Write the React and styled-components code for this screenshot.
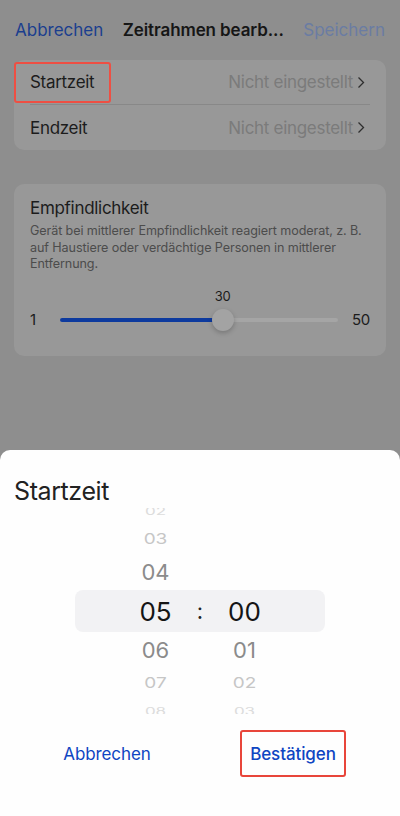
import styled, { createGlobalStyle } from 'styled-components'

const GlobalStyle = createGlobalStyle`
	* { box-sizing: border-box; }
	body {
		margin: 0;
		font-family: Inter, "Noto Sans", sans-serif;
		background: #8e8e8e;
		-webkit-font-smoothing: antialiased;
	}
`

const HOURS = [
	{ v: '02', d: -3 },
	{ v: '03', d: -2 },
	{ v: '04', d: -1 },
	{ v: '05', d: 0 },
	{ v: '06', d: 1 },
	{ v: '07', d: 2 },
	{ v: '08', d: 3 },
]

const MINUTES = [
	{ v: '', d: -3 },
	{ v: '', d: -2 },
	{ v: '', d: -1 },
	{ v: '00', d: 0 },
	{ v: '01', d: 1 },
	{ v: '02', d: 2 },
	{ v: '03', d: 3 },
]

const MIN = 1
const MAX = 50
const VALUE = 30

const App = () => {
	const pct = (VALUE - MIN) / (MAX - MIN)
	const thumbPos = `calc(11px + ${pct} * (100% - 22px))`
	return (
		<>
			<GlobalStyle />
			<Page>
				<NavBar>
					<NavButton>Abbrechen</NavButton>
					<NavTitle>Zeitrahmen bearb...</NavTitle>
					<NavButton $muted>Speichern</NavButton>
				</NavBar>

				<Card>
					<Row>
						<RowLabel $marked>Startzeit</RowLabel>
						<RowValue>Nicht eingestellt<Chevron /></RowValue>
					</Row>
					<Divider />
					<Row>
						<RowLabel>Endzeit</RowLabel>
						<RowValue>Nicht eingestellt<Chevron /></RowValue>
					</Row>
				</Card>

				<SensCard>
					<SensTitle>Empfindlichkeit</SensTitle>
					<SensText>
						Gerät bei mittlerer Empfindlichkeit reagiert moderat, z. B.<br />
						auf Haustiere oder verdächtige Personen in mittlerer<br />
						Entfernung.
					</SensText>
					<SliderRow>
						<SliderEnd>1</SliderEnd>
						<Track>
							<Fill style={{ width: thumbPos }} />
							<ValueTag style={{ left: thumbPos }}>{VALUE}</ValueTag>
							<Thumb style={{ left: thumbPos }} />
						</Track>
						<SliderEnd $right>50</SliderEnd>
					</SliderRow>
				</SensCard>
			</Page>

			<Sheet>
				<SheetTitle>Startzeit</SheetTitle>
				<Picker>
					<Band />
					<Wheel>
						{HOURS.map((h) => (
							<Cell key={h.v} $d={h.d}>{h.v}</Cell>
						))}
					</Wheel>
					<Colon>:</Colon>
					<Wheel>
						{MINUTES.map((m, i) => (
							<Cell key={i} $d={m.d}>{m.v}</Cell>
						))}
					</Wheel>
				</Picker>
				<Actions>
					<ActionCell>
						<ActionButton>Abbrechen</ActionButton>
					</ActionCell>
					<ActionCell>
						<ActionButton $primary $marked>Bestätigen</ActionButton>
					</ActionCell>
				</Actions>
			</Sheet>
		</>
	)
}

const Chevron = () => (
	<ChevronSvg width="8" height="13" viewBox="0 0 8 13">
		<polyline points="1.5,1.5 6.5,6.5 1.5,11.5" fill="none" stroke="#2e2e2e" strokeWidth="1.3" />
	</ChevronSvg>
)

export default App

const Page = styled.div`
	min-height: 816px;
	background: #8e8e8e;
	display: flex;
	flex-direction: column;
	padding: 0 14px;
	letter-spacing: -0.3px;
`

const NavBar = styled.div`
	height: 60px;
	display: flex;
	align-items: center;
	justify-content: space-between;
	padding: 0 1px 0 1px;
	font-size: 17px;
`

const NavButton = styled.span`
	color: ${(p) => (p.$muted ? '#6a7ca3' : '#1b3e8e')};
	letter-spacing: 0;
`

const NavTitle = styled.span`
	font-weight: 600;
	color: #161616;
	white-space: nowrap;
	letter-spacing: -0.1px;
`

const Card = styled.div`
	background: #989898;
	border-radius: 10px;
	display: flex;
	flex-direction: column;
`

const Row = styled.div`
	height: 44px;
	display: flex;
	align-items: center;
	justify-content: space-between;
	padding-right: 21px;
	&:last-child {
		height: 45px;
	}
`

const RowLabel = styled.span`
	height: 41px;
	display: inline-flex;
	align-items: center;
	padding: 0 15px 0 14px;
	border: 2px solid ${(p) => (p.$marked ? '#ee4f43' : 'transparent')};
	border-radius: 3px;
	font-size: 17px;
	color: #1c1c1c;
`

const RowValue = styled.span`
	display: flex;
	align-items: center;
	gap: 4px;
	font-size: 17px;
	color: #7b7b7b;
`

const ChevronSvg = styled.svg`
	display: block;
`

const Divider = styled.div`
	height: 1px;
	margin: 0 16px;
	background: #888888;
`

const SensCard = styled.div`
	margin-top: 34px;
	background: #989898;
	border-radius: 10px;
	padding: 13px 16px 25px;
	display: flex;
	flex-direction: column;
`

const SensTitle = styled.div`
	font-size: 17px;
	line-height: 22px;
	color: #1c1c1c;
`

const SensText = styled.div`
	margin-top: 4px;
	font-size: 12.6px;
	line-height: 16.5px;
	color: #4c4c4c;
	letter-spacing: -0.1px;
	white-space: nowrap;
`

const SliderRow = styled.div`
	margin-top: 36px;
	height: 22px;
	display: flex;
	align-items: center;
`

const SliderEnd = styled.span`
	width: ${(p) => (p.$right ? 'auto' : '30px')};
	margin-left: ${(p) => (p.$right ? '14px' : '0')};
	font-size: 15px;
	color: #1c1c1c;
`

const Track = styled.div`
	position: relative;
	flex: 1;
	height: 4px;
	border-radius: 2px;
	background: #a5a5a5;
`

const Fill = styled.div`
	height: 100%;
	border-radius: 2px;
	background: #0d3a9e;
`

const Thumb = styled.div`
	position: absolute;
	top: 50%;
	width: 22px;
	height: 22px;
	border-radius: 50%;
	transform: translate(-50%, -50%);
	background: #a3a3a3;
	box-shadow: 0 2px 5px rgba(0, 0, 0, 0.22);
`

const ValueTag = styled.span`
	position: absolute;
	bottom: 18px;
	transform: translateX(-50%);
	font-size: 13px;
	color: #1c1c1c;
`

const Sheet = styled.div`
	position: fixed;
	left: 0;
	right: 0;
	bottom: 0;
	height: 366px;
	background: #fefefe;
	border-radius: 10px 10px 0 0;
	padding: 27px 14px 0;
	display: flex;
	flex-direction: column;
`

const SheetTitle = styled.div`
	font-size: 25px;
	line-height: 28px;
	color: #222;
	letter-spacing: -0.4px;
`

const Picker = styled.div`
	position: relative;
	margin-top: 3px;
	height: 206px;
	overflow: hidden;
	display: flex;
	justify-content: center;
	align-items: flex-start;
`

const Band = styled.div`
	position: absolute;
	left: 61px;
	right: 61px;
	top: 82px;
	height: 42px;
	border-radius: 8px;
	background: #f2f2f4;
`

const Wheel = styled.div`
	position: relative;
	width: 50px;
	margin-top: -10px;
	display: flex;
	flex-direction: column;
	align-items: center;
`

const sizes = { 0: 26, 1: 22, 2: 19, 3: 17 }
const heights = { 0: 42, 1: 36, 2: 30, 3: 26 }
const colors = { 0: '#151515', 1: '#8b8b8b', 2: '#c6c6c6', 3: '#dcdcdc' }
const squash = { 0: 1, 1: 0.95, 2: 0.78, 3: 0.6 }

const Cell = styled.div`
	height: ${(p) => heights[Math.abs(p.$d)]}px;
	display: flex;
	align-items: center;
	justify-content: center;
	font-size: ${(p) => sizes[Math.abs(p.$d)]}px;
	color: ${(p) => colors[Math.abs(p.$d)]};
	transform: scaleY(${(p) => squash[Math.abs(p.$d)]});
`

const Colon = styled.div`
	position: relative;
	width: 39px;
	margin-top: 82px;
	height: 42px;
	display: flex;
	align-items: center;
	justify-content: center;
	font-size: 22px;
	color: #222;
`

const Actions = styled.div`
	margin-top: 16px;
	display: flex;
`

const ActionCell = styled.div`
	flex: 1;
	display: flex;
	justify-content: center;
`

const ActionButton = styled.button`
	height: 47px;
	padding: 0 8px;
	border: 2px solid ${(p) => (p.$marked ? '#e8453a' : 'transparent')};
	border-radius: 3px;
	background: none;
	font-family: Inter, "Noto Sans", sans-serif;
	font-size: 17px;
	font-weight: ${(p) => (p.$primary ? 500 : 400)};
	letter-spacing: -0.1px;
	color: #0f45c2;
	cursor: pointer;
`
